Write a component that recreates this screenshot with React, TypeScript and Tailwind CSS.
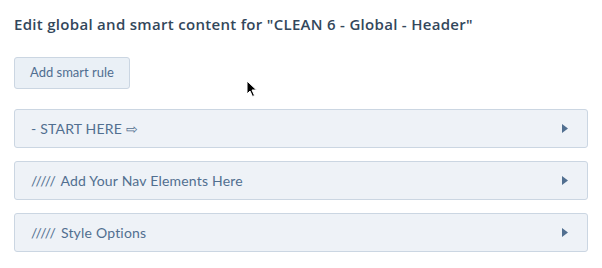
import React from "react";

const rows: [string, string][] = [
  ["", "- START HERE \u21E8"],
  ["/////", "Add Your Nav Elements Here"],
  ["/////", "Style Options"],
];

function Caret() {
  return (
    <svg width="6" height="9" viewBox="0 0 6 9" className="block">
      <path d="M0 0 L6 4.5 L0 9 Z" fill="#516f90" />
    </svg>
  );
}

function Cursor() {
  return (
    <svg width="12" height="18" viewBox="0 0 12 18" className="absolute left-[246px] top-[80px]">
      <path d="M1 1 L1 14 L4 11 L6.5 16.5 L8.5 15.5 L6 10 L10.5 10 Z" fill="#000" stroke="#fff" strokeWidth="1" />
    </svg>
  );
}

export default function App() {
  return (
    <div
      className="relative w-[602px] h-[268px] bg-white px-[14px] pt-[14px]"
      style={{ fontFamily: "Lato, 'Noto Sans', sans-serif" }}
    >
      <h1
        className="text-[15px] font-semibold text-[#33475b] leading-[20px] tracking-[0.3px]"
        style={{ fontFamily: "'Open Sans', sans-serif" }}
      >
        Edit global and smart content for "CLEAN 6 - Global - Header"
      </h1>
      <button className="mt-[23px] h-[32px] px-[15px] rounded-[3px] border border-[#cbd6e2] bg-[#eaf0f6] text-[13px] text-[#506e91]">
        Add smart rule
      </button>
      <div className="mt-[20px] flex flex-col gap-[13px] w-[574px]">
        {rows.map(([s, r]) => (
          <div
            key={r}
            className="h-[39px] flex items-center justify-between pl-[16px] pr-[19px] rounded-[3px] border border-[#cbd6e2] bg-[#eef2f7] text-[14px] text-[#516f90] tracking-[0.2px]"
          >
            <span>
              {s && <span className="tracking-[1.4px]">{s}</span>}
              {s ? " " : ""}
              {r}
            </span>
            <Caret />
          </div>
        ))}
      </div>
      <Cursor />
    </div>
  );
}
